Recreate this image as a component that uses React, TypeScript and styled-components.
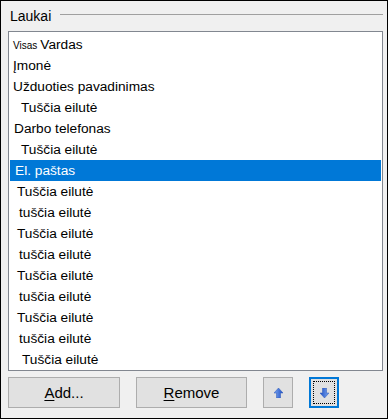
import * as React from 'react';
import styled, {createGlobalStyle} from 'styled-components';

interface Field {
    text: string,
    indent: number,
    prefix?: string,
    selected?: boolean,
}

const fields: Field[] = [
    {text: 'Vardas', indent: 3, prefix: 'Visas'},
    {text: 'Įmonė', indent: 3},
    {text: 'Užduoties pavadinimas', indent: 3},
    {text: 'Tuščia eilutė', indent: 11},
    {text: 'Darbo telefonas', indent: 4},
    {text: 'Tuščia eilutė', indent: 11},
    {text: 'El. paštas', indent: 5, selected: true},
    {text: 'Tuščia eilutė', indent: 7},
    {text: 'tuščia eilutė', indent: 9},
    {text: 'Tuščia eilutė', indent: 7},
    {text: 'tuščia eilutė', indent: 9},
    {text: 'Tuščia eilutė', indent: 7},
    {text: 'tuščia eilutė', indent: 9},
    {text: 'Tuščia eilutė', indent: 7},
    {text: 'tuščia eilutė', indent: 9},
    {text: 'Tuščia eilutė', indent: 12},
];

const GlobalStyle = createGlobalStyle`
  body {
    margin: 0;
    font-family: "Liberation Sans", Arial, sans-serif;
  }
`;

const Window = styled.div`
  width: 388px;
  height: 419px;
  box-sizing: border-box;
  border: 1px solid #000;
  background: #f0f0f0;
  padding: 0 4px 0 7px;
  display: flex;
  flex-direction: column;
`;

const Header = styled.div`
  height: 30px;
  display: flex;
  align-items: flex-start;
  padding-top: 7px;
  box-sizing: border-box;
`;

const Title = styled.span`
  font-size: 14px;
  line-height: 16px;
  color: #000;
  padding-left: 2px;
`;

const Rule = styled.div`
  flex: 1;
  margin: 6px 0 0 9px;
  border-top: 1px solid #a0a0a0;
`;

const ListBox = styled.div`
  width: 375px;
  height: 340px;
  box-sizing: border-box;
  border: 1px solid #828790;
  background: #fff;
  padding: 2px 1px 0 1px;
  overflow: hidden;
`;

const Row = styled.div<{ $selected?: boolean, $indent: number }>`
  height: 21px;
  line-height: 21px;
  font-size: 13.7px;
  white-space: nowrap;
  padding-left: ${p => p.$indent}px;
  background: ${p => p.$selected ? '#0078d7' : 'transparent'};
  color: ${p => p.$selected ? '#fff' : '#000'};
`;

const Small = styled.span`
  font-size: 10px;
  margin-right: 3px;
`;

const ButtonBar = styled.div`
  display: flex;
  margin-top: 6px;
`;

const Button = styled.button<{ $width: number, $gap: number, $focused?: boolean }>`
  width: ${p => p.$width}px;
  height: 31px;
  margin-left: ${p => p.$gap}px;
  box-sizing: border-box;
  border: ${p => p.$focused ? '2px solid #0078d7' : '1px solid #adadad'};
  background: #e1e1e1;
  padding: 0;
  font-family: "Liberation Sans", Arial, sans-serif;
  font-size: 15px;
  color: #000;
  display: flex;
  align-items: center;
  justify-content: center;
  position: relative;
`;

const FocusRect = styled.span`
  position: absolute;
  inset: 2px;
  border: 1px dotted #000;
`;

const Key = styled.span`
  text-decoration: underline;
  text-underline-offset: 2px;
`;

const Arrow: React.FC<{ down?: boolean }> = ({down}) => (
    <svg width="9" height="10" viewBox="0 0 9 10"
         style={{transform: down ? 'rotate(180deg)' : undefined}}>
        <defs>
            <linearGradient id={down ? 'ad' : 'au'} x1="0" x2="1" y1="0" y2="0">
                <stop offset="0" stopColor="#7aa6f0"/>
                <stop offset="1" stopColor="#1f4fc4"/>
            </linearGradient>
        </defs>
        <polygon points="4.5,0 9,5 6.5,5 6.5,10 2.5,10 2.5,5 0,5"
                 fill={`url(#${down ? 'ad' : 'au'})`} stroke="#2a56b8" strokeWidth="0.5"/>
    </svg>
);

const App = () => {
    return (
        <Window>
            <GlobalStyle/>
            <Header>
                <Title>Laukai</Title>
                <Rule/>
            </Header>
            <ListBox>
                {fields.map((f, i) => (
                    <Row key={i} $indent={f.indent} $selected={f.selected}>
                        {f.prefix && <Small>{f.prefix}</Small>}
                        {f.text}
                    </Row>
                ))}
            </ListBox>
            <ButtonBar>
                <Button $width={112} $gap={0}><span><Key>A</Key>dd...</span></Button>
                <Button $width={111} $gap={16}><span><Key>R</Key>emove</span></Button>
                <Button $width={30} $gap={16}><Arrow/></Button>
                <Button $width={30} $gap={16} $focused><FocusRect/><Arrow down/></Button>
            </ButtonBar>
        </Window>
    )
}

export default App
